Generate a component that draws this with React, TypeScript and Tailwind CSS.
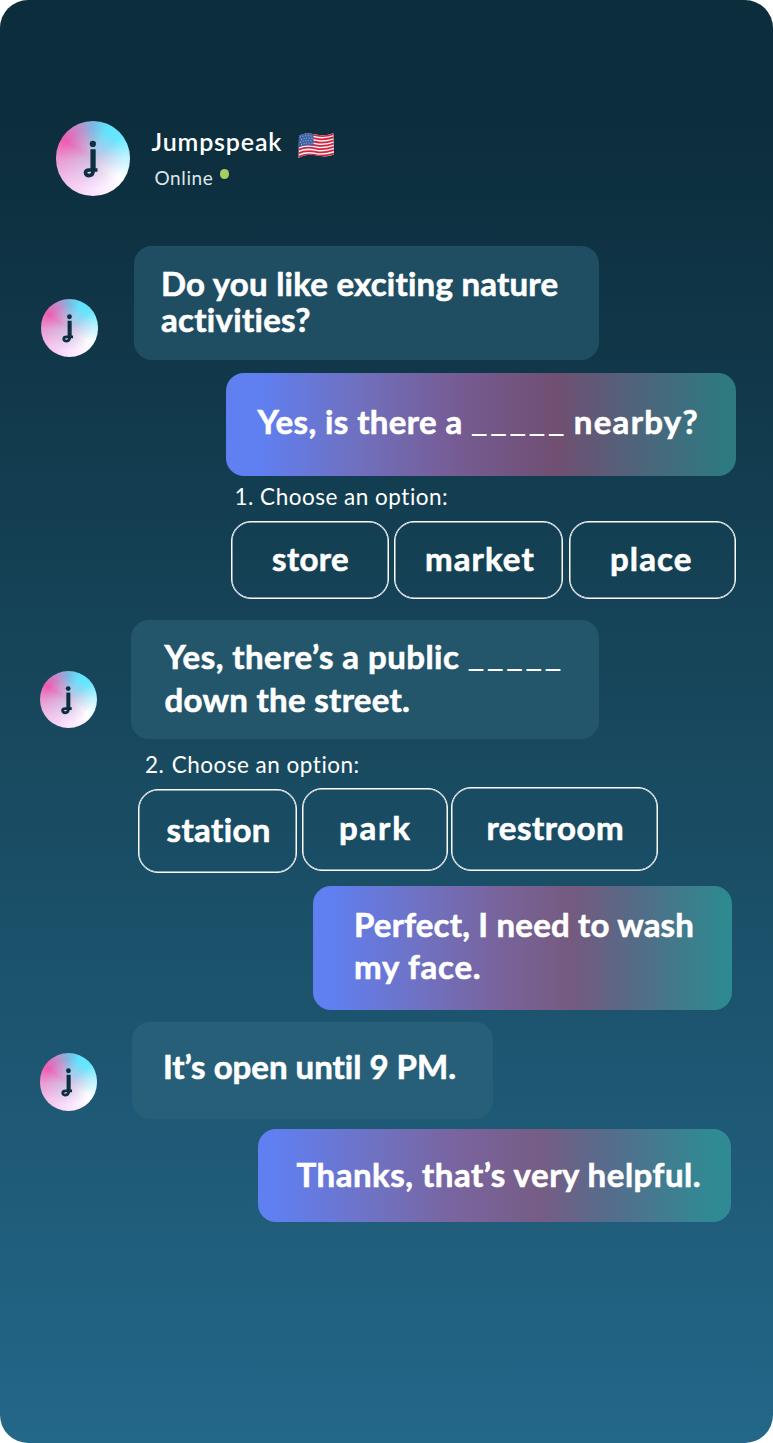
import type { ReactNode } from "react";
import clsx from "clsx";

function Avatar({ className }: { className?: string }) {
  return (
    <div
      className={clsx(
        "shrink-0 rounded-full bg-[radial-gradient(circle,#cfbfe2_0%,#cfbfe2b0_18%,#cfbfe200_58%),conic-gradient(from_0deg,#7cb9e2_0deg,#5fe4fd_25deg,#67e7ff_52deg,#b9f2ff_85deg,#ffffff_125deg,#fce4ff_180deg,#f3c6ee_225deg,#e9a0d4_265deg,#ee5cb2_302deg,#c38cc8_335deg,#7cb9e2_360deg)]",
        className
      )}
    >
      <svg viewBox="0 0 74 74" fill="none" className="h-full w-full">
        <circle cx="36.6" cy="22.8" r="3.1" fill="#0d2f40" />
        <path
          d="M37 29.5V49C37 52.8 35 54.2 32.8 54.2C30.6 54.2 29.3 53 29.3 51.4C29.3 49.6 31 48.7 33 48.7H41.2"
          stroke="#0d2f40"
          strokeWidth="3.6"
        />
        <path d="M36.8 28V50" stroke="#0d2f40" strokeWidth="5.2" />
      </svg>
    </div>
  );
}

function Flag() {
  return (
    <svg viewBox="0 0 36 27" className="h-[27px] w-9 shrink-0">
      <defs>
        <clipPath id="flag">
          <path d="M1 3.5C7 .5 12 1.2 18 2.6C25 4.2 30 3 35.5 1.2L36 22.6C30 25 25 24.7 18 23.3C12 22 7 22.5.5 26Z" />
        </clipPath>
      </defs>
      <g clipPath="url(#flag)">
        <rect width="36" height="27" fill="#f3f1f4" />
        <g fill="none" stroke="#d3233f" strokeWidth="1.8">
          <path d="M0 4.4C7 1.2 12 2 18 3.4S30 4 36 2" />
          <path d="M0 7.8C7 4.6 12 5.3 18 6.7S30 7.2 36 5.2" />
          <path d="M0 11.2C7 8 12 8.6 18 10S30 10.4 36 8.4" />
          <path d="M0 14.6C7 11.4 12 11.9 18 13.3S30 13.6 36 11.6" />
          <path d="M0 18C7 14.8 12 15.2 18 16.6S30 16.8 36 14.8" />
          <path d="M0 21.4C7 18.2 12 18.5 18 19.9S30 20 36 18" />
          <path d="M0 25C7 21.6 12 21.8 18 23.2S30 23.4 36 21.6" />
        </g>
        <path d="M0 3C6 .5 11 1 15.5 2V14C10 12.9 6 13 0 15.7Z" fill="#3c62a4" />
        <g fill="none" stroke="#b4c6e4" strokeWidth=".9" strokeDasharray="1 1.7">
          <path d="M2 5.2C6 3.4 10 3.5 15 4.2" />
          <path d="M3 7.6C7 5.8 10 5.9 15 6.6" />
          <path d="M2 10.4C6 8.4 10 8.4 15 9" />
          <path d="M3 12.6C7 10.8 10 10.8 15 11.4" />
        </g>
      </g>
    </svg>
  );
}

function Blank() {
  return (
    <span className="relative -top-[3px] -mr-[3px] ml-px font-['Open_Sans'] text-[33px] font-normal tracking-[4.8px] [-webkit-text-stroke:0px]">
      _____
    </span>
  );
}

function Line({ className, children }: { className?: string; children: ReactNode }) {
  return <span className={clsx("block whitespace-nowrap", className)}>{children}</span>;
}

function Bubble({ className, children }: { className?: string; children: ReactNode }) {
  return (
    <div
      className={clsx(
        "shrink-0 rounded-[18px] text-[33px] font-bold [-webkit-text-stroke:0.6px_white]",
        className
      )}
    >
      {children}
    </div>
  );
}

function Option({ className, children }: { className?: string; children: ReactNode }) {
  return (
    <button
      type="button"
      className={clsx(
        "shrink-0 rounded-[20px] border border-white text-left text-[33px] leading-[42px] font-bold whitespace-nowrap shadow-[inset_0_0_0_0.5px_#ffffff] [-webkit-text-stroke:0.6px_white]",
        className
      )}
    >
      {children}
    </button>
  );
}

export default function App() {
  return (
    <div className="h-[1443px] w-[773px] bg-white">
      <main className="flex h-full w-full flex-col overflow-hidden rounded-[28px] bg-linear-to-b from-[#0c2d3c] from-8% via-[#18495f] via-52% to-[#236789] pt-[121px] font-['Lato',sans-serif] text-white [font-variant-ligatures:none]">
        {/* Header */}
        <header className="flex h-[125px] pl-[55.5px]">
          <Avatar className="h-[74.5px] w-[74.5px]" />
          <div className="ml-[21.5px]">
            <div className="flex h-[42px] pt-[5px]">
              <span className="w-[131px] text-[25px] leading-[30px] font-semibold tracking-[0.85px]">
                Jumpspeak
              </span>
              <div className="ml-[15px] pt-[6px]">
                <Flag />
              </div>
            </div>
            <div className="flex pt-[3px] pl-[3px]">
              <span className="w-[65px] text-[19px] leading-[24px] tracking-[0.6px] text-[#dde6ea]">
                Online
              </span>
              <span className="mt-[3px] h-[9.5px] w-[9.5px] rounded-full bg-[#a6cf63]" />
            </div>
          </div>
        </header>

        {/* Conversation */}
        <div className="flex h-[114px] shrink-0 items-end pl-[40.5px]">
          <Avatar className="mb-[3.5px] h-[57.5px] w-[57.5px]" />
          <Bubble className="ml-9 h-[114px] w-[465px] bg-[#1f4e63] pt-[19px] pl-[27px] leading-[36px]">
            <Line className="tracking-[0.24px]">Do you like exciting nature</Line>
            <Line className="tracking-[0.3px]">activities?</Line>
          </Bubble>
        </div>

        <Bubble className="mt-[13px] ml-[226px] h-[103px] w-[510px] bg-[linear-gradient(90deg,#607ff0_7%,#706fbc_27%,#765c94_45%,#704f72_65%,#50637b_80%,#2d7a80_98%)] pt-[27px] pl-[31.5px] leading-[42px]">
          <Line className="tracking-[0.4px]">
            Yes, is there a <Blank /> <span className="tracking-[1.3px]">nearby?</span>
          </Line>
        </Bubble>

        <p className="h-[46px] shrink-0 pt-[7px] pl-[234.5px] text-[22.5px] leading-[28px] tracking-[0.5px] whitespace-nowrap">
          1. Choose an option:
        </p>
        <div className="flex h-[98px] shrink-0 pl-[231px]">
          <Option className="-mt-px h-[78px] w-[158px] pb-[5px] pl-10 tracking-[0.4px]">
            store
          </Option>
          <Option className="-mt-px ml-[5px] h-[78px] w-[169px] pb-[5px] pl-[30px] tracking-[1.1px]">
            market
          </Option>
          <Option className="-mt-px ml-[6px] h-[78px] w-[167px] pb-[5px] pl-10 tracking-[1.1px]">
            place
          </Option>
        </div>

        <div className="flex h-[119px] shrink-0 items-end pl-10">
          <Avatar className="mb-[11px] h-[57px] w-[57px]" />
          <Bubble className="ml-[34px] h-[119px] w-[468px] bg-[#24566b] pt-[15px] pl-[33.5px] leading-[42px]">
            <Line className="tracking-[0.45px]">
              Yes, there’s a public <Blank />
            </Line>
            <Line className="tracking-[0.3px]">down the street.</Line>
          </Bubble>
        </div>

        <p className="h-[48px] shrink-0 pt-3 pl-[145px] text-[22.5px] leading-[28px] tracking-[0.5px] whitespace-nowrap">
          2. <span className="ml-px">Choose an option:</span>
        </p>
        <div className="flex h-[99px] shrink-0 pl-[138px]">
          <Option className="mt-[2px] h-[84px] w-[159px] pb-[5px] pl-[27.5px] tracking-[0.4px]">
            station
          </Option>
          <Option className="mt-px ml-[5px] h-[83px] w-[146px] pb-[5px] pl-[36px] tracking-[1.8px]">
            park
          </Option>
          <Option className="ml-[3px] h-[84px] w-[207px] pb-[5px] pl-[34.5px] tracking-[0.5px]">
            restroom
          </Option>
        </div>

        <Bubble className="ml-[313px] h-[124px] w-[419px] bg-[linear-gradient(90deg,#607ff0_4%,#6f72c4_25%,#79639a_45%,#755a80_62%,#566a86_76%,#2e8990_98%)] pt-[17px] pl-[41px] leading-[42px]">
          <Line className="tracking-[0.2px]">Perfect, I need to wash</Line>
          <Line className="tracking-[0.75px]">my face.</Line>
        </Bubble>

        <div className="mt-3 flex h-[97px] shrink-0 items-end pl-[39.5px]">
          <Avatar className="mb-[8.5px] h-[57.5px] w-[57.5px]" />
          <Bubble className="ml-[35px] h-[97px] w-[361px] bg-[#275f79] pt-[23px] pl-[31px] leading-[42px]">
            <Line>It’s open until 9 PM.</Line>
          </Bubble>
        </div>

        <Bubble className="mt-2.5 ml-[258px] h-[93px] w-[473px] bg-[linear-gradient(90deg,#607ff0_4%,#6f72c4_24%,#79649e_42%,#765d85_60%,#566c8c_74%,#2f8a94_96%)] pt-6 pl-[38.5px] leading-[42px]">
          <Line className="tracking-[0.52px]">Thanks, that’s very helpful.</Line>
        </Bubble>
      </main>
    </div>
  );
}
